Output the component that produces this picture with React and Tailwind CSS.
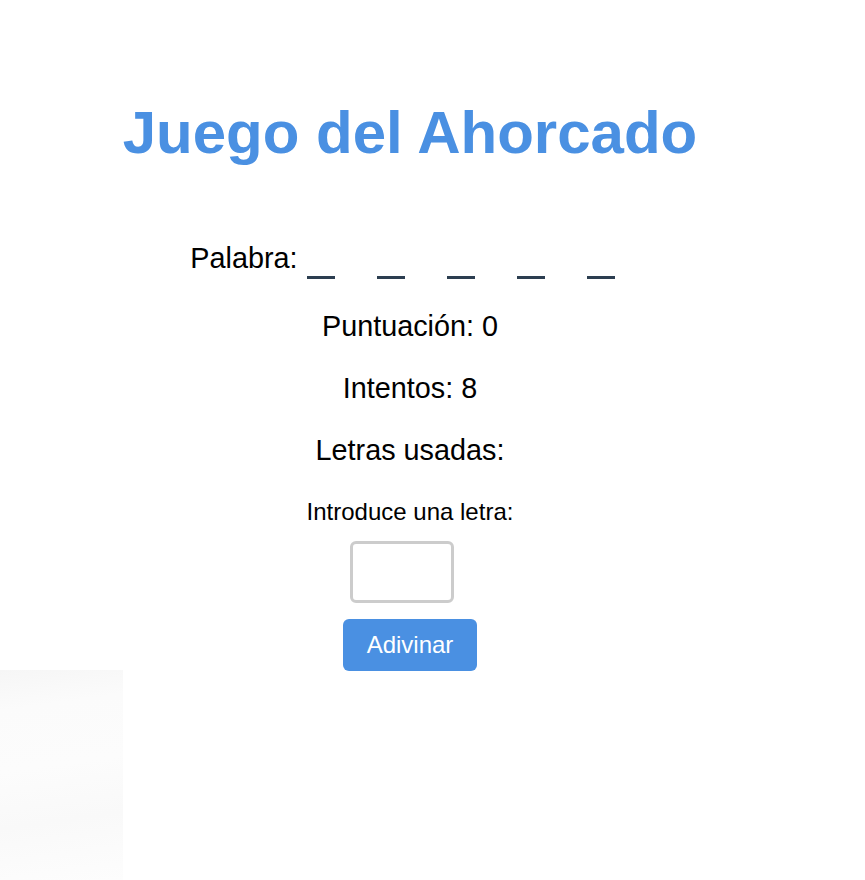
export default function App() {
  return (
    <div className="relative w-full min-h-[880px] bg-white overflow-hidden" style={{ fontFamily: '"Liberation Sans", Arial, sans-serif' }}>
      <div className="absolute left-0 top-[670px] w-[123px] h-[210px] bg-[linear-gradient(172deg,#f6f6f6_0%,#fbfbfb_18%,#fcfcfc_45%,#f9f9f9_70%,#fdfdfd_100%)]" />
      <div className="relative w-[820px] flex flex-col items-center text-center">
        <h1 className="mt-[98px] text-[60px] leading-[69px] font-bold text-[#4a90e2]">Juego del Ahorcado</h1>
        <div className="mt-[75px] flex items-baseline text-[28.8px] leading-[33px] text-black">
          <span>Palabra:</span>
          <div className="ml-[9px] mr-[15px] flex gap-[42px] self-end mb-[-4px]">
            <div className="w-[28px] h-[3px] bg-[#2c3e50]" />
            <div className="w-[28px] h-[3px] bg-[#2c3e50]" />
            <div className="w-[28px] h-[3px] bg-[#2c3e50]" />
            <div className="w-[28px] h-[3px] bg-[#2c3e50]" />
            <div className="w-[28px] h-[3px] bg-[#2c3e50]" />
          </div>
        </div>
        <p className="mt-[35px] text-[28.8px] leading-[33px] text-black">Puntuación: 0</p>
        <p className="mt-[29px] text-[28.8px] leading-[33px] text-black">Intentos: 8</p>
        <p className="mt-[29px] text-[28.8px] leading-[33px] text-black">Letras usadas: </p>
        <label className="mt-[31px] text-[24px] leading-[28px] text-black">Introduce una letra:</label>
        <input type="text" maxLength={1} className="mt-[15px] mr-[16px] w-[104px] h-[62px] border-[3px] border-[#cccccc] rounded-[6px] bg-white outline-none text-center text-[24px]" />
        <button className="mt-[16px] w-[134px] h-[52px] rounded-[6px] bg-[#4a90e2] text-white text-[24px]">Adivinar</button>
      </div>
    </div>
  );
}
